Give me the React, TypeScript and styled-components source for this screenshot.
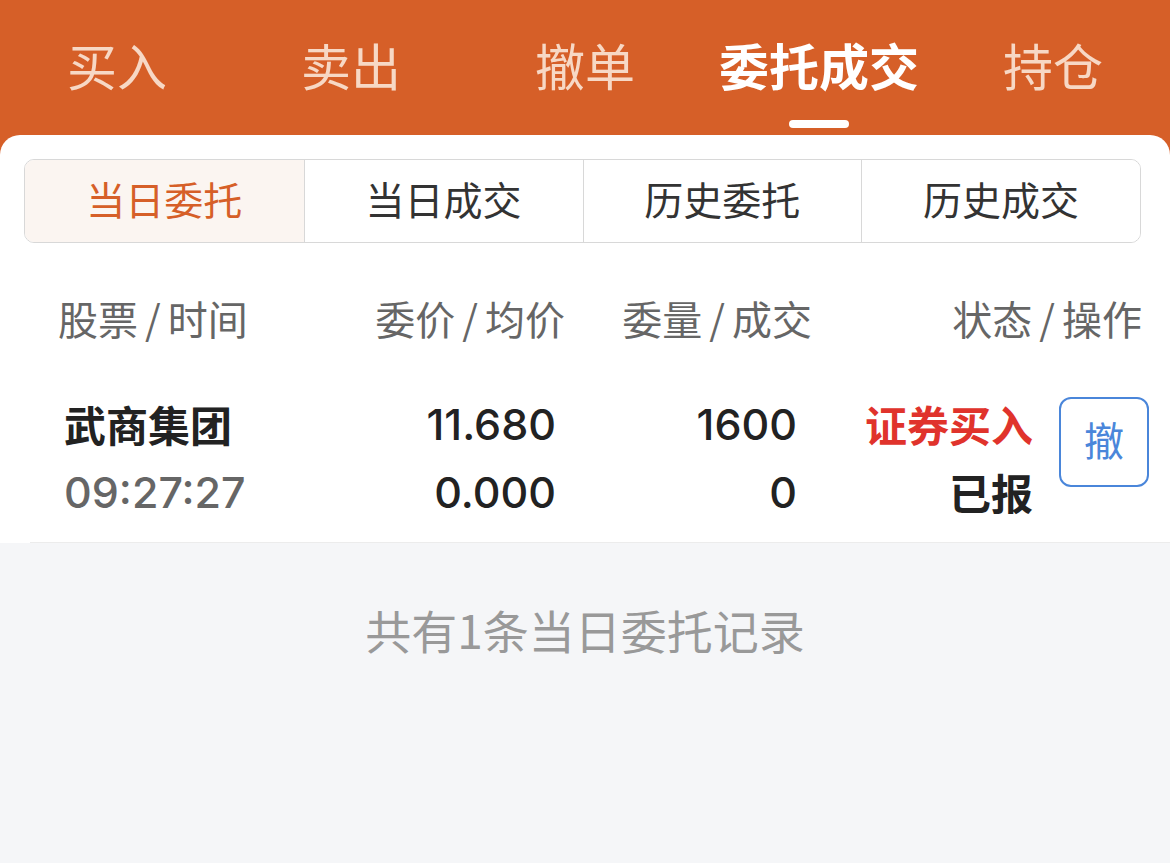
import React from 'react';
import styled, { createGlobalStyle } from 'styled-components';

const orange = '#D65F28';
const cjk = '"Noto Sans CJK SC", "Noto Sans", sans-serif';
const num = 'Inter, "Noto Sans CJK SC", sans-serif';

const GlobalStyle = createGlobalStyle`
  html, body {
    margin: 0;
    padding: 0;
    background: #F5F6F8;
    font-family: ${cjk};
  }
`;

const Page = styled.div`
  width: 1170px;
  min-height: 863px;
  background: #F5F6F8;
`;

const Top = styled.div`
  background: ${orange};
`;

const TabBar = styled.div`
  display: grid;
  grid-template-columns: repeat(5, 1fr);
  height: 135px;
`;

const Tab = styled.div<{ $active?: boolean }>`
  position: relative;
  display: flex;
  justify-content: center;
  padding-top: 32px;
  box-sizing: border-box;
  font-size: 50px;
  line-height: 64px;
  color: ${(p) => (p.$active ? '#FFFFFF' : '#F7D8C5')};
  font-weight: ${(p) => (p.$active ? 700 : 400)};

  ${(p) =>
    p.$active &&
    `
    &::after {
      content: '';
      position: absolute;
      left: 50%;
      top: 120px;
      width: 60px;
      height: 8px;
      margin-left: -30px;
      border-radius: 4px;
      background: #FFFFFF;
    }
  `}
`;

const Card = styled.div`
  background: #FFFFFF;
  border-radius: 20px 20px 0 0;
  padding-top: 24px;
`;

const Segments = styled.div`
  display: grid;
  grid-template-columns: repeat(4, 1fr);
  margin: 0 29px 0 24px;
  height: 84px;
  border: 1px solid #D8D8D8;
  border-radius: 10px;
  overflow: hidden;
  box-sizing: border-box;
`;

const Segment = styled.div<{ $active?: boolean }>`
  display: flex;
  align-items: center;
  justify-content: center;
  padding-bottom: 6px;
  font-size: 39px;
  color: ${(p) => (p.$active ? orange : '#333333')};
  background: ${(p) => (p.$active ? '#FBF5F1' : '#FFFFFF')};
  & + & {
    border-left: 1px solid #D8D8D8;
  }
`;

const HeadRow = styled.div`
  display: grid;
  grid-template-columns: 250px 257px 247px 1fr;
  padding: 0 28px 0 58px;
  height: 150px;
  align-items: center;
  font-size: 40px;
  color: #666666;
  box-sizing: border-box;
`;

const HeadCell = styled.div<{ $right?: boolean }>`
  text-align: ${(p) => (p.$right ? 'right' : 'left')};
  white-space: nowrap;
`;

const Slash = styled.span`
  margin: 0 7px;
`;

const OrderRow = styled.div`
  display: grid;
  grid-template-columns: 236px 256px 241px 236px 1fr;
  margin-left: 30px;
  padding: 0 21px 19px 34px;
  height: 130px;
  align-items: center;
  border-bottom: 1px solid #ECECEC;
`;

const Stack = styled.div<{ $right?: boolean }>`
  display: flex;
  flex-direction: column;
  gap: 14px;
  align-items: ${(p) => (p.$right ? 'flex-end' : 'flex-start')};
`;

const Line = styled.div<{ $tone?: 'dark' | 'gray' | 'red'; $num?: boolean; $bold?: boolean }>`
  font-family: ${(p) => (p.$num ? num : cjk)};
  font-size: ${(p) => (p.$num ? '43px' : '42px')};
  line-height: 54px;
  font-weight: ${(p) => (p.$bold ? 700 : 500)};
  color: ${(p) => (p.$tone === 'red' ? '#E0332C' : p.$tone === 'gray' ? '#666666' : '#222222')};
  white-space: nowrap;
`;

const ActionCell = styled.div`
  display: flex;
  justify-content: flex-end;
  padding-bottom: 32px;
`;

const CancelButton = styled.button`
  width: 90px;
  height: 90px;
  border: 2px solid #4A86DA;
  border-radius: 12px;
  background: #FFFFFF;
  color: #4A86DA;
  font-family: ${cjk};
  font-size: 40px;
  padding: 0 0 6px;
`;

const Footer = styled.div`
  text-align: center;
  padding-top: 56px;
  font-size: 46px;
  line-height: 60px;
  color: #999999;
`;

const tabs = ['买入', '卖出', '撤单', '委托成交', '持仓'];
const segments = ['当日委托', '当日成交', '历史委托', '历史成交'];
const heads = [
  ['股票', '时间'],
  ['委价', '均价'],
  ['委量', '成交'],
  ['状态', '操作'],
];

export default function App() {
  return (
    <Page>
      <GlobalStyle />
      <Top>
        <TabBar>
          {tabs.map((t) => (
            <Tab key={t} $active={t === '委托成交'}>
              {t}
            </Tab>
          ))}
        </TabBar>
        <Card>
          <Segments>
            {segments.map((s, i) => (
              <Segment key={s} $active={i === 0}>
                {s}
              </Segment>
            ))}
          </Segments>
          <HeadRow>
            {heads.map(([a, b], i) => (
              <HeadCell key={a} $right={i > 0}>
                {a}
                <Slash>/</Slash>
                {b}
              </HeadCell>
            ))}
          </HeadRow>
          <OrderRow>
            <Stack>
              <Line $bold>武商集团</Line>
              <Line $tone="gray" $num>09:27:27</Line>
            </Stack>
            <Stack $right>
              <Line $num>11.680</Line>
              <Line $num>0.000</Line>
            </Stack>
            <Stack $right>
              <Line $num>1600</Line>
              <Line $num>0</Line>
            </Stack>
            <Stack $right>
              <Line $tone="red" $bold>证券买入</Line>
              <Line $bold>已报</Line>
            </Stack>
            <ActionCell>
              <CancelButton>撤</CancelButton>
            </ActionCell>
          </OrderRow>
        </Card>
      </Top>
      <Footer>共有1条当日委托记录</Footer>
    </Page>
  );
}
